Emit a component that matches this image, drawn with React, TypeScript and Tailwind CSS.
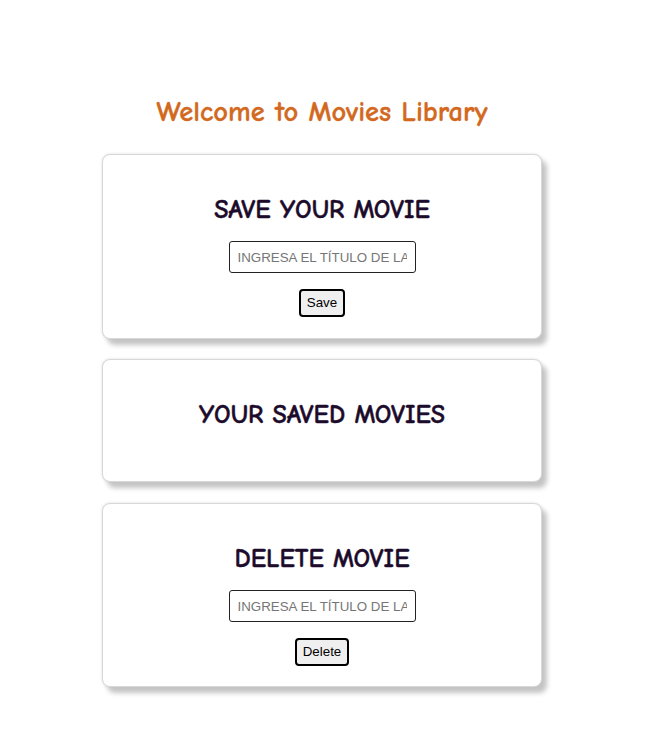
import React from "react";

const comic = { fontFamily: '"Comic Sans MS", "Comic Neue", cursive' };

function Card({ children, className }: { children: React.ReactNode; className: string }) {
  return (
    <section
      className={`flex w-[440px] flex-col items-center rounded-lg border border-[#d8d8d8] bg-white shadow-[5px_6px_5px_#c4c4c4,0_0_3px_#dedede] ${className}`}
    >
      {children}
    </section>
  );
}

function Heading({ children }: { children: React.ReactNode }) {
  return (
    <h2 style={comic} className="h-8 text-[26px] leading-8 font-bold text-[#1c0b2b] [-webkit-text-stroke:0.4px_#1c0b2b]">
      {children}
    </h2>
  );
}

function TitleInput() {
  return (
    <input
      type="text"
      placeholder="INGRESA EL TÍTULO DE LA PELÍCULA"
      className="mt-[15px] h-8 w-[187px] rounded-[3px] border border-[#222] px-2 font-['Liberation_Sans',Arial,sans-serif] text-[13.333px] text-black placeholder:text-[#767676] focus:outline-none"
    />
  );
}

export default function App() {
  return (
    <div className="min-h-[748px] w-[644px] bg-white pt-[94px]">
      <div className="flex flex-col items-center">
        <h1 style={comic} className="h-9 text-[28.5px] leading-9 font-bold text-[#d2691e] [-webkit-text-stroke:0.3px_#d2691e]">
          Welcome to Movies Library
        </h1>

        <Card className="mt-[24px] pt-[39px] pb-[21px]">
          <Heading>SAVE YOUR MOVIE</Heading>
          <TitleInput />
          <button
            type="button"
            className="mt-4 h-7 rounded-[4px] border-2 border-black bg-[#efefef] px-[6px] font-['Liberation_Sans',Arial,sans-serif] text-[13.333px] text-black"
          >
            Save
          </button>
        </Card>

        <Card className="mt-5 pt-[39px] pb-[50px]">
          <Heading>YOUR SAVED MOVIES</Heading>
        </Card>

        <Card className="mt-[21px] pt-[39px] pb-[20px]">
          <Heading>DELETE MOVIE</Heading>
          <TitleInput />
          <button
            type="button"
            className="mt-4 h-7 rounded-[4px] border-2 border-black bg-[#efefef] px-[6px] font-['Liberation_Sans',Arial,sans-serif] text-[13.333px] text-black"
          >
            Delete
          </button>
        </Card>
      </div>
    </div>
  );
}
